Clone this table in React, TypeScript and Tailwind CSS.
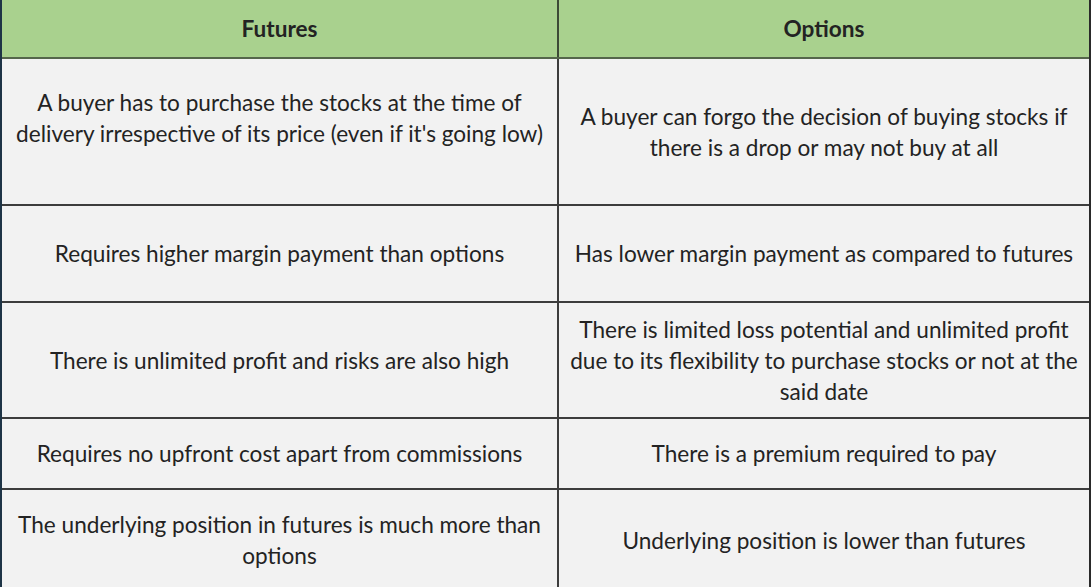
import React from "react";

const rows: { h: string; f: string[]; o: string[]; fpad?: string }[] = [
  {
    h: "h-[147px]",
    f: ["A buyer has to purchase the stocks at the time of", "delivery irrespective of its price (even if it's going low)"],
    o: ["A buyer can forgo the decision of buying stocks if", "there is a drop or may not buy at all"],
    fpad: "pb-[28px]",
  },
  {
    h: "h-[97px]",
    f: ["Requires higher margin payment than options"],
    o: ["Has lower margin payment as compared to futures"],
  },
  {
    h: "h-[116px]",
    f: ["There is unlimited profit and risks are also high"],
    o: ["There is limited loss potential and unlimited profit", "due to its flexibility to purchase stocks or not at the", "said date"],
  },
  {
    h: "h-[71px]",
    f: ["Requires no upfront cost apart from commissions"],
    o: ["There is a premium required to pay"],
  },
  {
    h: "h-[100px]",
    f: ["The underlying position in futures is much more than", "options"],
    o: ["Underlying position is lower than futures"],
  },
];

function Cell({ lines, left, pad }: { lines: string[]; left?: boolean; pad?: string }) {
  return (
    <div
      className={
        "flex flex-col items-center justify-center text-center " +
        (left ? "border-r-2 border-[#3d3d3d] " : "") +
        (pad ?? "")
      }
    >
      {lines.map((l, i) => (
        <div key={i} className="leading-[31px] whitespace-nowrap">
          {l}
        </div>
      ))}
    </div>
  );
}

export default function App() {
  return (
    <div
      className="w-[1092px] h-[587px] overflow-hidden bg-white text-[#232323] text-[22.6px]"
      style={{ fontFamily: "Lato, 'Open Sans', sans-serif" }}
    >
      <div className="w-[1091px] border-l-2 border-r-2 border-l-[#1e3446] border-r-[#2a2a2a] bg-[#f2f2f2]">
        <div className="grid grid-cols-[557px_1fr] h-[59px] bg-[#a9d18e] border-b-2 border-[#55664b] font-bold">
          <div className="flex items-center justify-center border-r-2 border-[#3d4a36]">Futures</div>
          <div className="flex items-center justify-center">Options</div>
        </div>
        {rows.map((r, i) => (
          <div
            key={i}
            className={
              "grid grid-cols-[557px_1fr] " +
              r.h +
              (i < rows.length - 1 ? " border-b-2 border-[#3d3d3d]" : "")
            }
          >
            <Cell lines={r.f} left pad={r.fpad} />
            <Cell lines={r.o} />
          </div>
        ))}
      </div>
    </div>
  );
}
